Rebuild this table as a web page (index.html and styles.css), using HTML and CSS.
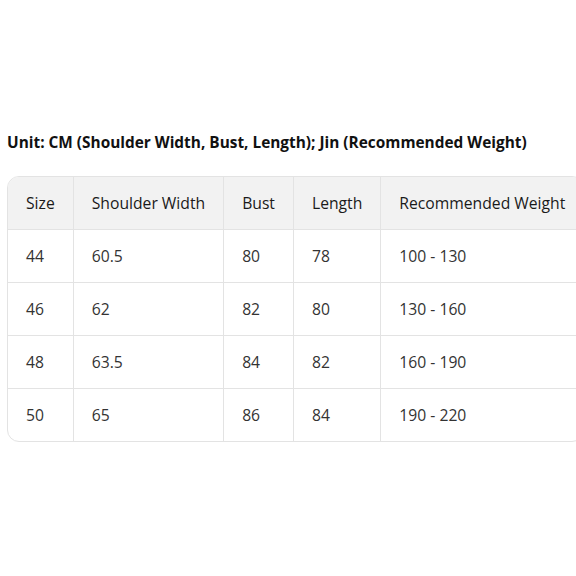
FILE: index.html
```html
<!DOCTYPE html>
<html>
<head>
<meta charset="utf-8">
<link rel="stylesheet" href="styles.css">
</head>
<body>
<div class="page">
  <p class="unit">Unit: CM (Shoulder Width, Bust, Length); Jin (Recommended Weight)</p>
  <div class="wrap">
    <table class="sizes">
      <thead>
        <tr><th>Size</th><th>Shoulder Width</th><th>Bust</th><th>Length</th><th>Recommended Weight</th></tr>
      </thead>
      <tbody>
        <tr><td>44</td><td>60.5</td><td>80</td><td>78</td><td>100 - 130</td></tr>
        <tr><td>46</td><td>62</td><td>82</td><td>80</td><td>130 - 160</td></tr>
        <tr><td>48</td><td>63.5</td><td>84</td><td>82</td><td>160 - 190</td></tr>
        <tr><td>50</td><td>65</td><td>86</td><td>84</td><td>190 - 220</td></tr>
      </tbody>
    </table>
  </div>
</div>
</body>
</html>
```
FILE: styles.css
```css
html, body { margin: 0; padding: 0; background: #fff; overflow: hidden; }
body { font-family: "Open Sans", "Noto Sans", sans-serif; color: #222; }
.page { padding: 133px 0 0 7px; width: 620px; }
.unit { margin: 0 0 23px 0; font-weight: 700; font-size: 15.4px; line-height: 20px; color: #111; }
.wrap { display: inline-block; border: 1px solid #e3e3e3; border-radius: 12px; overflow: hidden; }
.sizes { border-collapse: collapse; font-size: 15.7px; }
.sizes th, .sizes td { padding: 0 18px; height: 52px; text-align: left; border-right: 1px solid #e3e3e3; border-bottom: 1px solid #e3e3e3; white-space: nowrap; }
.sizes th:last-child, .sizes td:last-child { border-right: none; }
.sizes tbody tr:last-child td { border-bottom: none; }
.sizes th { background: #f2f2f2; font-weight: 500; color: #1a1a1a; }
.sizes td { color: #333; }
```
